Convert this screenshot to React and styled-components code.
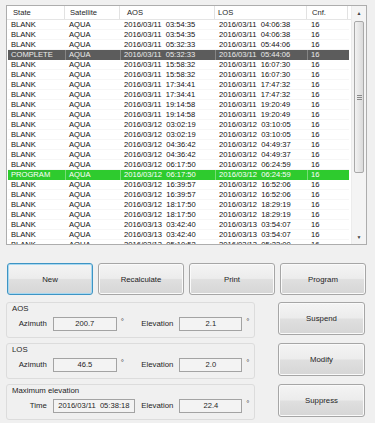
import React from 'react'
import styled, { createGlobalStyle } from 'styled-components'

const GlobalStyle = createGlobalStyle`
    body {
        margin: 0;
        background: #f0f0f0;
        font-family: 'Liberation Sans', Arial, sans-serif;
        color: #1a1a1a;
    }
`

const Window = styled.div`
    width: 375px;
    height: 423px;
    box-sizing: border-box;
    padding: 5px 8px 0 6px;
    background: #f0f0f0;
    display: flex;
    flex-direction: column;
    overflow: hidden;
`

const ListFrame = styled.div`
    width: 361px;
    height: 240px;
    box-sizing: border-box;
    border: 1px solid #adadad;
    background: #ffffff;
    display: flex;
`

const ListArea = styled.div`
    flex: 1;
    overflow: hidden;
    display: flex;
    flex-direction: column;
`

const COLUMNS = '58px 55px 95px 92px 41px 1fr'

const HeaderRow = styled.div`
    display: grid;
    grid-template-columns: ${COLUMNS};
    height: 14px;
    flex-shrink: 0;
    border-bottom: 1px solid #e5e5e5;
    box-sizing: border-box;
`

const HeaderCell = styled.div`
    padding-left: ${props => props.pad || 5}px;
    font-size: 7.6px;
    line-height: 13px;
    color: #1e1e1e;
    border-right: ${props => props.last ? 'none' : '1px solid #e2e2e2'};
    white-space: nowrap;
`

const Rows = styled.div`
    padding-left: 1px;
`

const Row = styled.div`
    display: grid;
    grid-template-columns: 58px 55px 95px 92px 41px;
    width: 341px;
    height: 10px;
    background: ${props => props.bg || 'transparent'};
    color: ${props => props.fg || '#111'};
    box-shadow: inset 0 -1px 0 ${props => props.bg ? 'transparent' : '#f6f6f6'};
`

const Cell = styled.div`
    padding-left: 3px;
    font-size: 7.6px;
    line-height: 10px;
    white-space: pre;
    overflow: hidden;
    border-right: 1px solid ${props => props.sep || 'transparent'};
`

const Scrollbar = styled.div`
    width: 14px;
    flex-shrink: 0;
    background: #f4f4f4;
    border-left: 1px solid #ececec;
    display: flex;
    flex-direction: column;
`

const Arrow = styled.div`
    height: 14px;
    display: flex;
    align-items: center;
    justify-content: center;
    font-size: 5px;
    color: #444;
`

const Track = styled.div`
    flex: 1;
    padding: 1px 2px 0 2px;
`

const Thumb = styled.div`
    height: 152px;
    box-sizing: border-box;
    border: 1px solid #a9a9a9;
    border-radius: 2px;
    background: linear-gradient(to right, #f2f2f2, #e6e6e6 50%, #dadada);
    display: flex;
    align-items: center;
    justify-content: center;
`

const Grip = styled.div`
    width: 5px;
    height: 5px;
    background: repeating-linear-gradient(to bottom, #8a8a8a 0 1px, transparent 1px 2px);
`

const ButtonRow = styled.div`
    margin: 18px 0 0 1px;
    display: grid;
    grid-template-columns: repeat(4, 86px);
    column-gap: 5px;
`

const Button = styled.div`
    height: ${props => props.h || 32}px;
    box-sizing: border-box;
    border: 1px solid ${props => props.focused ? '#3d94c4' : '#a6a6a6'};
    border-radius: 3px;
    background: linear-gradient(to bottom, #f4f4f4 0%, #ececec 48%, #dfdfdf 52%, #d6d6d6 100%);
    box-shadow: inset 0 0 0 1px ${props => props.focused ? '#a8d8f0' : '#fafafa'};
    display: flex;
    align-items: center;
    justify-content: center;
    font-size: 7.8px;
    color: #1e1e1e;
`

const Lower = styled.div`
    margin-top: 7px;
    display: flex;
    gap: 23px;
`

const Groups = styled.div`
    width: 249px;
    display: flex;
    flex-direction: column;
    gap: 5px;
`

const SideButtons = styled.div`
    width: 87px;
    display: flex;
    flex-direction: column;
    gap: 8px;
`

const GroupBox = styled.div`
    height: 36px;
    box-sizing: border-box;
    border: 1px solid #dcdcdc;
    border-radius: 3px;
    padding: 1px 0 0 5px;
`

const GroupTitle = styled.div`
    font-size: 7.8px;
    line-height: 10px;
    color: #1e1e1e;
`

const FieldRow = styled.div`
    margin-top: 3px;
    display: flex;
    align-items: flex-start;
`

const Label = styled.div`
    width: ${props => props.w}px;
    text-align: right;
    font-size: 7.8px;
    line-height: 14px;
    color: #1e1e1e;
`

const Field = styled.div`
    width: ${props => props.w}px;
    margin-left: 6px;
    display: flex;
`

const Input = styled.div`
    width: ${props => props.w}px;
    height: 14px;
    box-sizing: border-box;
    border: 1px solid #a3a3a3;
    background: #f3f3f3;
    font-size: 7.6px;
    line-height: 12px;
    text-align: center;
    color: #1e1e1e;
    white-space: pre;
`

const Degree = styled.div`
    margin-left: 4px;
    font-size: 8px;
    line-height: 9px;
    color: #333;
`

const rows = [
    ['BLANK', '2016/03/11  03:54:35', '2016/03/11  04:06:38'],
    ['BLANK', '2016/03/11  03:54:35', '2016/03/11  04:06:38'],
    ['BLANK', '2016/03/11  05:32:33', '2016/03/11  05:44:06'],
    ['COMPLETE', '2016/03/11  05:32:33', '2016/03/11  05:44:06'],
    ['BLANK', '2016/03/11  15:58:32', '2016/03/11  16:07:30'],
    ['BLANK', '2016/03/11  15:58:32', '2016/03/11  16:07:30'],
    ['BLANK', '2016/03/11  17:34:41', '2016/03/11  17:47:32'],
    ['BLANK', '2016/03/11  17:34:41', '2016/03/11  17:47:32'],
    ['BLANK', '2016/03/11  19:14:58', '2016/03/11  19:20:49'],
    ['BLANK', '2016/03/11  19:14:58', '2016/03/11  19:20:49'],
    ['BLANK', '2016/03/12  03:02:19', '2016/03/12  03:10:05'],
    ['BLANK', '2016/03/12  03:02:19', '2016/03/12  03:10:05'],
    ['BLANK', '2016/03/12  04:36:42', '2016/03/12  04:49:37'],
    ['BLANK', '2016/03/12  04:36:42', '2016/03/12  04:49:37'],
    ['BLANK', '2016/03/12  06:17:50', '2016/03/12  06:24:59'],
    ['PROGRAM', '2016/03/12  06:17:50', '2016/03/12  06:24:59'],
    ['BLANK', '2016/03/12  16:39:57', '2016/03/12  16:52:06'],
    ['BLANK', '2016/03/12  16:39:57', '2016/03/12  16:52:06'],
    ['BLANK', '2016/03/12  18:17:50', '2016/03/12  18:29:19'],
    ['BLANK', '2016/03/12  18:17:50', '2016/03/12  18:29:19'],
    ['BLANK', '2016/03/13  03:42:40', '2016/03/13  03:54:07'],
    ['BLANK', '2016/03/13  03:42:40', '2016/03/13  03:54:07'],
    ['BLANK', '2016/03/13  05:10:52', '2016/03/13  05:22:00'],
]

const rowColors = {
    COMPLETE: { bg: '#5c5c5c', fg: '#ececec', sep: 'rgba(255,255,255,0.25)' },
    PROGRAM: { bg: '#2ecb2e', fg: '#ffffff', sep: 'rgba(255,255,255,0.35)' },
}

function Group({ title, first, second }) {
    return (
        <GroupBox>
            <GroupTitle>{title}</GroupTitle>
            <FieldRow>
                <Label w={35}>{first.label}</Label>
                <Field w={87}>
                    <Input w={first.w}>{first.value}</Input>
                    {first.deg && <Degree>°</Degree>}
                </Field>
                <Label w={34}>Elevation</Label>
                <Field w={75}>
                    <Input w={63}>{second}</Input>
                    <Degree>°</Degree>
                </Field>
            </FieldRow>
        </GroupBox>
    )
}

export default function App() {
    return (
        <Window>
            <GlobalStyle />
            <ListFrame>
                <ListArea>
                    <HeaderRow>
                        <HeaderCell pad={6}>State</HeaderCell>
                        <HeaderCell>Satellite</HeaderCell>
                        <HeaderCell pad={7}>AOS</HeaderCell>
                        <HeaderCell pad={3}>LOS</HeaderCell>
                        <HeaderCell>Cnf.</HeaderCell>
                        <HeaderCell last />
                    </HeaderRow>
                    <Rows>
                        {rows.map((r, idx) => {
                            const c = rowColors[r[0]] || {}
                            return (
                                <Row key={idx} bg={c.bg} fg={c.fg}>
                                    <Cell sep={c.sep}>{r[0]}</Cell>
                                    <Cell sep={c.sep}>AQUA</Cell>
                                    <Cell sep={c.sep}>{r[1]}</Cell>
                                    <Cell sep={c.sep}>{r[2]}</Cell>
                                    <Cell>16</Cell>
                                </Row>
                            )
                        })}
                    </Rows>
                </ListArea>
                <Scrollbar>
                    <Arrow>▲</Arrow>
                    <Track>
                        <Thumb><Grip /></Thumb>
                    </Track>
                    <Arrow>▼</Arrow>
                </Scrollbar>
            </ListFrame>

            <ButtonRow>
                <Button focused>New</Button>
                <Button>Recalculate</Button>
                <Button>Print</Button>
                <Button>Program</Button>
            </ButtonRow>

            <Lower>
                <Groups>
                    <Group title="AOS" first={{ label: 'Azimuth', value: '200.7', w: 64, deg: true }} second="2.1" />
                    <Group title="LOS" first={{ label: 'Azimuth', value: '46.5', w: 64, deg: true }} second="2.0" />
                    <Group title="Maximum elevation" first={{ label: 'Time', value: '2016/03/11  05:38:18', w: 82 }} second="22.4" />
                </Groups>
                <SideButtons>
                    <Button h={33}>Suspend</Button>
                    <Button h={33}>Modify</Button>
                    <Button h={33}>Suppress</Button>
                </SideButtons>
            </Lower>
        </Window>
    )
}
